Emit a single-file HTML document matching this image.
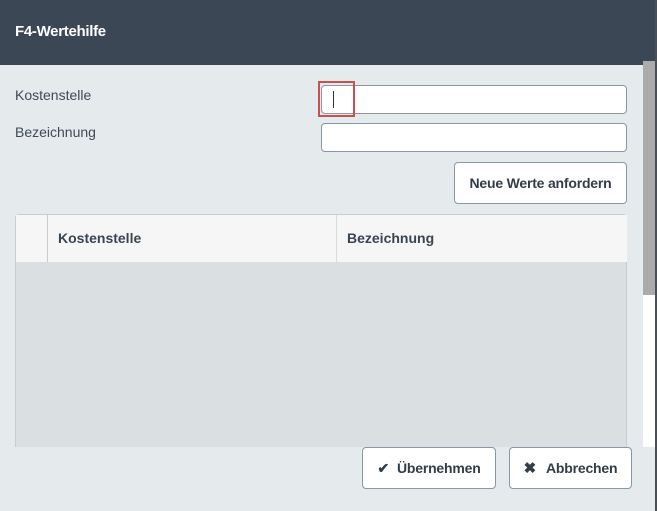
<!DOCTYPE html>
<html><head><style>
*{box-sizing:border-box;margin:0;padding:0}
body{width:657px;height:511px;overflow:hidden;background:#e5eaed;font-family:"Liberation Sans",sans-serif;position:relative;color:#3a4552}
.hdr{position:absolute;left:0;top:0;width:657px;height:65px;background:#3c4755}
.hdr span{position:absolute;left:15px;top:23px;color:#fff;font-size:15px;font-weight:bold;letter-spacing:-0.3px}
.lbl{position:absolute;left:15px;font-size:14px;color:#3e4a56}
.inp{position:absolute;left:321px;width:306px;height:29px;background:#fff;border:1px solid #8a97a6;border-radius:4px}
.btn{position:absolute;background:#fff;border:1px solid #8a97a6;border-radius:4px;font-size:14px;color:#333d48;font-weight:bold;display:flex;align-items:center;justify-content:center;letter-spacing:-0.2px}
.tbl{position:absolute;left:15px;top:214px;width:612px;height:233px;background:#dadfe2;border:1px solid #c5ccd2;border-bottom:none;border-radius:4px 4px 0 0}
.th{position:absolute;top:0;height:47px;background:#f6f6f6;font-size:14px;font-weight:bold;color:#3a4552;padding:15px 10px}
</style></head><body>
<div class="hdr"><span>F4-Wertehilfe</span></div>
<div class="lbl" style="top:87px">Kostenstelle</div>
<div class="lbl" style="top:124px">Bezeichnung</div>
<div class="inp" style="top:85px"></div>
<div class="inp" style="top:123px"></div>
<div style="position:absolute;left:318px;top:81px;width:37px;height:36px;border:2px solid #c9504f"></div>
<div style="position:absolute;left:333px;top:91px;width:1px;height:17px;background:#333"></div>
<div class="btn" style="left:454px;top:162px;width:173px;height:42px">Neue Werte anfordern</div>
<div class="tbl">
<div class="th" style="left:0;width:32px;border-right:1px solid #c5ccd2"></div>
<div class="th" style="left:32px;width:289px;border-right:1px solid #d8dcdf">Kostenstelle</div>
<div class="th" style="left:321px;width:290px">Bezeichnung</div>
</div>
<div style="position:absolute;left:643px;top:61px;width:12px;height:386px;background:#fff"></div>
<div style="position:absolute;left:643px;top:61px;width:12px;height:234px;background:#ababab"></div>
<div style="position:absolute;left:655px;top:0;width:2px;height:511px;background:#4a4f55"></div>
<div class="btn" style="left:362px;top:447px;width:134px;height:42px"><span style="margin-right:8px;font-size:14px">✔</span>Übernehmen</div>
<div class="btn" style="left:509px;top:447px;width:123px;height:42px"><span style="margin-right:10px;font-size:15px">✖</span>Abbrechen</div>
</body></html>
